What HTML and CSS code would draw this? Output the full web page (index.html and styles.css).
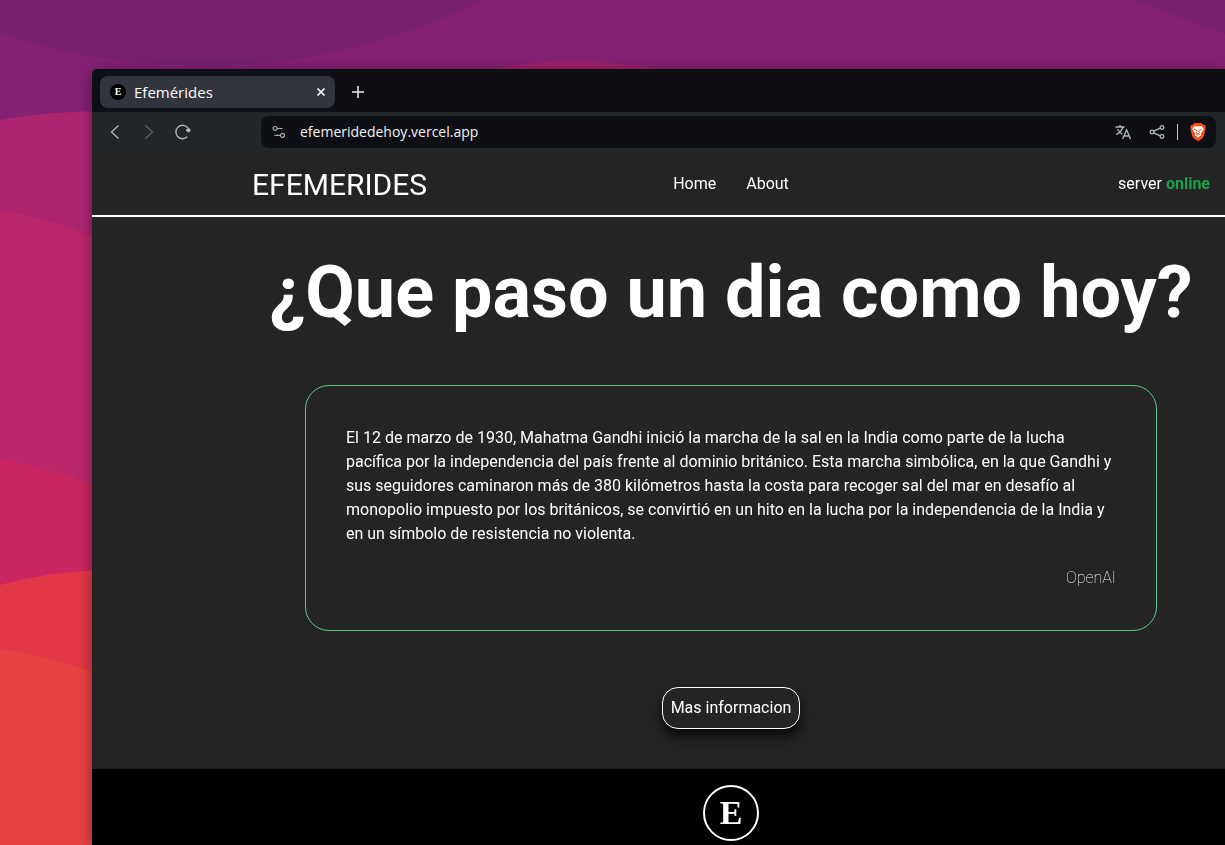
FILE: index.html
```html
<!DOCTYPE html>
<html lang="es">
<head>
<meta charset="utf-8">
<meta name="viewport" content="width=device-width, initial-scale=1">
<title>Efemérides</title>
<link rel="stylesheet" href="styles.css">
</head>
<body class="desktop">
<svg class="wallpaper" viewBox="0 0 1225 845" preserveAspectRatio="none" aria-hidden="true">
  <rect width="1225" height="845" fill="#852173"/>
  <path d="M0 0H485Q350 64 215 66Q90 66 0 32Z" fill="#79216f"/>
  <path d="M1133 0H1225V34Z" fill="#79216f"/>
  <path d="M492 70Q570 52 660 70Z" fill="#9c216c"/>
  <path d="M0 120Q50 111 110 111V845H0Z" fill="#ad256f"/>
  <path d="M0 211Q50 217 110 244V845H0Z" fill="#ba276a"/>
  <path d="M0 459Q50 468 110 491V845H0Z" fill="#c92561"/>
  <path d="M0 585Q50 571 110 570V845H0Z" fill="#e23747"/>
  <path d="M0 649Q50 656 110 678V845H0Z" fill="#e64241"/>
</svg>
<div class="window">
  <div class="tabs">
    <div class="tab">
      <span class="favicon">E</span>
      <span class="tab-title">Efemérides</span>
      <button class="icon-button tab-close" aria-label="Cerrar pestaña">
        <svg width="10" height="10" viewBox="0 0 10 10"><path d="M1.500 1.500l7 7M8.500 1.500l-7 7" stroke="#fff" stroke-width="1.700"/></svg>
      </button>
    </div>
    <button class="icon-button" aria-label="Nueva pestaña">
      <svg width="14" height="14" viewBox="0 0 14 14"><path d="M7 1v12M1 7h12" stroke="#eee" stroke-width="1.500"/></svg>
    </button>
  </div>
  <div class="toolbar">
    <div class="history">
      <button class="icon-button" aria-label="Atrás"><svg width="18" height="18" viewBox="0 0 18 18"><path d="M12.500 2.500L5.500 9l7 6.500" fill="none" stroke="#b5b7bc" stroke-width="1.300"/></svg></button>
      <button class="icon-button" aria-label="Adelante"><svg width="18" height="18" viewBox="0 0 18 18"><path d="M5.500 2.500L12.500 9l-7 6.500" fill="none" stroke="#5d6066" stroke-width="1.300"/></svg></button>
      <button class="icon-button" aria-label="Recargar"><svg width="18" height="18" viewBox="0 0 18 18"><path d="M13.300 13.800A6.700 6.700 0 1 1 14 5" fill="none" stroke="#b5b7bc" stroke-width="1.400"/><path d="M12.200 8.300L11.900 6.500 14.400 4.900 16.400 6V8.300L14.900 9.600z" fill="#b5b7bc"/></svg></button>
    </div>
    <div class="address">
      <svg width="14" height="14" viewBox="0 0 14 14" fill="none" stroke="#a9abb0" stroke-width="1.200"><circle cx="3.200" cy="3.500" r="2"/><path d="M5.200 3.500H10.500M2.500 10.300H8.500"/><circle cx="10.500" cy="10.300" r="2"/></svg>
      <input class="url" type="text" aria-label="Dirección" value="efemeridedehoy.vercel.app">
      <div class="address-tools">
        <button class="icon-button" aria-label="Traducir"><svg width="18" height="18" viewBox="0 0 18 18" fill="none" stroke="#b5b7bc" stroke-width="1.300"><path d="M1.500 4h9M6 2v2M9 4C8 7.500 5.500 10 2 11.500M3.500 6C4.500 8.500 6 10 8.500 11M8.600 16L12.600 6.800L16.600 16M10 13h5.200"/></svg></button>
        <button class="icon-button" aria-label="Compartir"><svg width="18" height="18" viewBox="0 0 18 18" fill="none" stroke="#b5b7bc" stroke-width="1.300"><circle cx="4" cy="9" r="1.800"/><circle cx="14" cy="4.500" r="1.800"/><circle cx="14" cy="13.500" r="1.800"/><path d="M5.700 8.200l6.600-3M5.700 9.800l6.600 3"/></svg></button>
        <span class="divider"></span>
        <button class="icon-button" aria-label="Brave Shields"><svg width="18" height="20" viewBox="0 0 18 20"><path d="M5.500 1h7l1.800 1.700 1.600 0 .8 2.400-.3 1.200.2.900-2 7.300-1.300 2L9 19.300 4.700 16.500l-1.300-2-2-7.300.2-.9-.3-1.200.8-2.400 1.600 0z" fill="#f4501e"/><path d="M5.700 3.900l3.300.6 3.300-.6 2.300 2.500-.5 1.900-2.500 3.600 .6 1.400-2 1.300L9 15.900l-1.200-1.300-2-1.300.6-1.400-2.500-3.600-.5-1.900z" fill="#fff"/><path d="M5.200 7.300l2.500.6.400 1.300-.8 1.700M12.800 7.300l-2.500.6-.4 1.300.8 1.700M7.300 12.100L9 11.300l1.700.8L9 13.200z" fill="none" stroke="#f4501e" stroke-width=".9"/></svg></button>
      </div>
    </div>
  </div>
  <header class="site-header">
    <div class="brand">EFEMERIDES</div>
    <nav class="nav"><a href="#home">Home</a><a href="#about">About</a></nav>
    <div class="status">server <strong>online</strong></div>
  </header>
  <main class="content">
    <h1 class="headline">¿Que paso un dia como hoy?</h1>
    <article class="card">
      <p class="card-text">El 12 de marzo de 1930, Mahatma Gandhi inició la marcha de la sal en la India como parte de la lucha pacífica por la independencia del país frente al dominio británico. Esta marcha simbólica, en la que Gandhi y sus seguidores caminaron más de 380 kilómetros hasta la costa para recoger sal del mar en desafío al monopolio impuesto por los británicos, se convirtió en un hito en la lucha por la independencia de la India y en un símbolo de resistencia no violenta.</p>
      <p class="card-source">OpenAI</p>
    </article>
    <button class="more">Mas informacion</button>
  </main>
  <footer class="site-footer"><div class="logo">E</div></footer>
</div>
</body>
</html>
```
FILE: styles.css
```css
* {
  box-sizing: border-box;
}

.desktop {
  margin: 0;
  min-height: 100vh;
  padding: 69px 0 0 92px;
  display: flex;
  overflow: hidden;
  background: #852173;
  font-family: Roboto, "Liberation Sans", sans-serif;
  font-size: 16px;
  line-height: 24px;
  color: #fff;
}

.wallpaper {
  position: fixed;
  inset: 0;
  width: 100%;
  height: 100%;
}

.window {
  position: relative;
  flex: 1;
  min-width: 0;
  display: flex;
  flex-direction: column;
  background: #242424;
  border-top-left-radius: 5px;
  box-shadow: 0 2px 14px rgba(0, 0, 0, 0.4);
}

.icon-button {
  display: flex;
  align-items: center;
  justify-content: center;
  padding: 0;
  border: 0;
  background: none;
}

.tabs {
  display: flex;
  align-items: center;
  gap: 16px;
  padding: 7px 8px 4px;
  background: #0d0f14;
  border-top-left-radius: 5px;
  font-family: "Open Sans", "Noto Sans", sans-serif;
  font-size: 15px;
}

.tab {
  display: flex;
  align-items: center;
  width: 235px;
  height: 32px;
  padding: 0 9px 0 10px;
  background: #32343e;
  border-radius: 8px;
}

.favicon {
  width: 16px;
  height: 16px;
  margin-right: 8px;
  border-radius: 50%;
  background: #000;
  font: bold 10px/16px "Liberation Serif", serif;
  text-align: center;
}

.tab-title {
  flex: 1;
}

.toolbar {
  display: flex;
  align-items: center;
  gap: 69px;
  padding: 4px 9px 4px 14px;
  background: #22262b;
}

.history {
  display: flex;
  gap: 16px;
}

.address {
  flex: 1;
  display: flex;
  align-items: center;
  height: 32px;
  padding: 0 9px 0 11px;
  background: #0d0f14;
  border-radius: 8px;
}

.url {
  flex: 1;
  min-width: 0;
  margin-left: 14px;
  padding: 0;
  border: 0;
  background: none;
  color: #f2f2f3;
  font: 14px/20px "Open Sans", "Noto Sans", sans-serif;
}

.address-tools {
  display: flex;
  align-items: center;
  gap: 16px;
}

.divider {
  width: 1px;
  height: 16px;
  margin: 0 -5px;
  background: #c3c4c8;
}

.site-header {
  display: grid;
  grid-template-columns: 1fr auto 1fr;
  align-items: baseline;
  padding: 15px 15px 12px 160px;
  border-bottom: 2px solid #fff;
}

.brand {
  font-size: 30px;
  line-height: 36px;
}

.nav {
  display: flex;
  gap: 30px;
}

.nav,
.status {
  align-self: start;
  padding-top: 5px;
}

.nav a {
  color: inherit;
  text-decoration: none;
}

.status {
  text-align: right;
}

.status strong {
  color: #16a34a;
}

.content {
  display: flex;
  flex-direction: column;
  align-items: center;
  padding: 40px 15px 40px 160px;
}

.headline {
  margin: 0;
  font-size: 72px;
  line-height: 72px;
  font-weight: 700;
  text-align: center;
}

.card {
  width: 100%;
  max-width: 852px;
  margin: 56px 0;
  padding: 40px;
  border: 1px solid #5cca8f;
  border-radius: 24px;
}

.card-text {
  margin: 0;
}

.card-source {
  margin: 20px 0 0;
  text-align: right;
  font-weight: 100;
}

.more {
  padding: 8px;
  border: 1px solid #fff;
  border-radius: 16px;
  background: #242424;
  color: inherit;
  font: inherit;
  box-shadow: 0 8px 12px rgba(0, 0, 0, 0.75);
}

.site-footer {
  flex: 1;
  display: flex;
  justify-content: center;
  padding: 16px 15px 4px 160px;
  background: #000;
}

.logo {
  width: 56px;
  height: 56px;
  border: 2px solid #fff;
  border-radius: 50%;
  font: bold 34px/52px "Liberation Serif", serif;
  text-align: center;
}
```
